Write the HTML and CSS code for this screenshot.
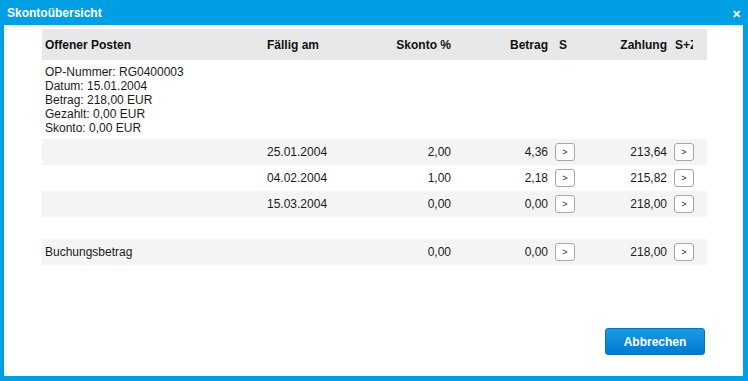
FILE: index.html
```html
<!DOCTYPE html>
<html lang="de">
<head>
    <meta charset="UTF-8">
    <title>Skontoübersicht</title>
    <link rel="stylesheet" href="styles.css">
</head>
<body>
    <div class="dialog">
        <div class="dialog-title">
            <span>Skontoübersicht</span>
            <span class="close">&#x2715;</span>
        </div>
        <div class="dialog-content">
            <table class="skonto-table">
                <colgroup>
                    <col class="c-op">
                    <col class="c-date">
                    <col class="c-pct">
                    <col class="c-amount">
                    <col class="c-s">
                    <col class="c-pay">
                    <col class="c-sp">
                </colgroup>
                <thead>
                    <tr>
                        <th>Offener Posten</th>
                        <th>Fällig am</th>
                        <th class="num">Skonto %</th>
                        <th class="num">Betrag</th>
                        <th class="btn-col s-head">S</th>
                        <th class="num">Zahlung</th>
                        <th class="btn-col"><span class="clip">S+Z</span></th>
                    </tr>
                </thead>
                <tbody>
                    <tr class="info-row">
                        <td colspan="7">
                            OP-Nummer: RG0400003<br>
                            Datum: 15.01.2004<br>
                            Betrag: 218,00 EUR<br>
                            Gezahlt: 0,00 EUR<br>
                            Skonto: 0,00 EUR
                        </td>
                    </tr>
                    <tr class="row alt">
                        <td></td>
                        <td>25.01.2004</td>
                        <td class="num">2,00</td>
                        <td class="num">4,36</td>
                        <td class="btn-col"><button class="mini">&gt;</button></td>
                        <td class="num">213,64</td>
                        <td class="btn-col"><button class="mini">&gt;</button></td>
                    </tr>
                    <tr class="row">
                        <td></td>
                        <td>04.02.2004</td>
                        <td class="num">1,00</td>
                        <td class="num">2,18</td>
                        <td class="btn-col"><button class="mini">&gt;</button></td>
                        <td class="num">215,82</td>
                        <td class="btn-col"><button class="mini">&gt;</button></td>
                    </tr>
                    <tr class="row alt">
                        <td></td>
                        <td>15.03.2004</td>
                        <td class="num">0,00</td>
                        <td class="num">0,00</td>
                        <td class="btn-col"><button class="mini">&gt;</button></td>
                        <td class="num">218,00</td>
                        <td class="btn-col"><button class="mini">&gt;</button></td>
                    </tr>
                    <tr class="spacer"><td colspan="7"></td></tr>
                    <tr class="row alt">
                        <td>Buchungsbetrag</td>
                        <td></td>
                        <td class="num">0,00</td>
                        <td class="num">0,00</td>
                        <td class="btn-col"><button class="mini">&gt;</button></td>
                        <td class="num">218,00</td>
                        <td class="btn-col"><button class="mini">&gt;</button></td>
                    </tr>
                </tbody>
            </table>
            <div class="dialog-footer">
                <button class="primary">Abbrechen</button>
            </div>
        </div>
    </div>
</body>
</html>
```

FILE: styles.css
```css
/* Skonto dialog */
body {
    margin: 0;
    font-family: "Liberation Sans", Arial, sans-serif;
    font-size: 12px;
    color: #1a1a1a;
}

.dialog {
    width: 748px;
    height: 381px;
    background-color: #009fe3;
    display: flex;
    flex-direction: column;
    box-sizing: border-box;
    padding: 0 5px 5px 4px;
}

.dialog-title {
    height: 25px;
    display: flex;
    align-items: center;
    justify-content: space-between;
    padding: 0 2px 0 3px;
    color: #fff;
    font-weight: bold;
    font-size: 12px;
}

.close {
    font-size: 11px;
    font-weight: bold;
    margin-top: 3px;
}

.dialog-content {
    flex: 1;
    background-color: #fff;
    display: flex;
    flex-direction: column;
    padding: 4px 36px 0 38px;
}

.skonto-table {
    border-collapse: collapse;
    table-layout: fixed;
    width: 665px;
}

.c-op { width: 222px; }
.c-date { width: 126px; }
.c-pct { width: 64px; }
.c-amount { width: 97px; }
.c-s { width: 43px; }
.c-pay { width: 76px; }
.c-sp { width: 37px; }

.skonto-table th {
    background-color: #e8e8e8;
    height: 31px;
    text-align: left;
    font-weight: bold;
    padding: 0 3px;
    color: #111;
    white-space: nowrap;
}

.skonto-table td {
    padding: 0 3px;
    white-space: nowrap;
}

.skonto-table .num {
    text-align: right;
}

.skonto-table .btn-col {
    padding: 0 0 0 4px;
}

.skonto-table th.btn-col {
    padding-left: 5px;
}

.skonto-table th.s-head {
    padding-left: 8px;
}

.clip {
    display: inline-block;
    width: 18px;
    overflow: hidden;
    vertical-align: middle;
}

.info-row td {
    line-height: 14px;
    padding: 5px 3px 4px;
}

.row td {
    height: 26px;
}

.row.alt td {
    background-color: #f4f4f4;
}

.spacer td {
    height: 22px;
}

.mini {
    width: 20px;
    height: 18px;
    padding: 0;
    border: 1px solid #a6a6a6;
    border-radius: 3px;
    background-color: #fff;
    font-family: inherit;
    font-size: 9px;
    color: #222;
    display: block;
}

.dialog-footer {
    margin-top: auto;
    display: flex;
    justify-content: flex-end;
    padding: 0 2px 21px 0;
}

.primary {
    width: 100px;
    height: 27px;
    border: 1px solid #0a70b8;
    border-radius: 3px;
    background: linear-gradient(#1b9be3, #0079cf);
    color: #fff;
    font-family: inherit;
    font-weight: bold;
    font-size: 12px;
    padding: 0;
}
```
